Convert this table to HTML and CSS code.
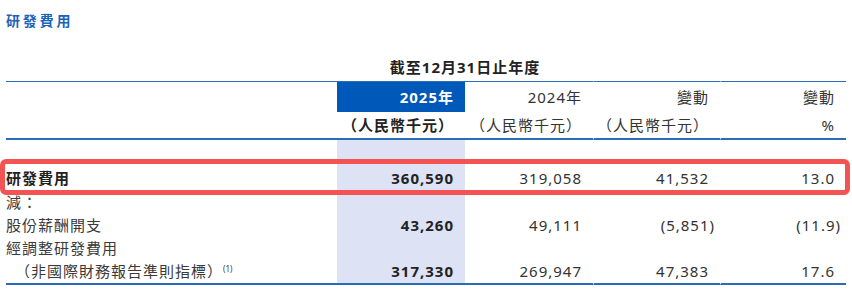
FILE: index.html
```html
<!DOCTYPE html>
<html lang="zh-Hant">
<head>
<meta charset="utf-8">
<title>研發費用</title>
<link rel="stylesheet" href="styles.css">
</head>
<body>
<div class="page">
  <div class="title">研發費用</div>
  <table class="fin">
    <colgroup>
      <col class="c-label">
      <col class="c-num">
      <col class="c-num">
      <col class="c-num4">
      <col class="c-num5">
    </colgroup>
    <tr class="period">
      <td></td>
      <td colspan="2" class="period-text">截至12月31日止年度</td>
      <td class="gap"></td>
      <td class="gap"></td>
    </tr>
    <tr class="years">
      <td></td>
      <td class="num cur">2025年</td>
      <td class="num">2024年</td>
      <td class="num gap">變動</td>
      <td class="num gap">變動</td>
    </tr>
    <tr class="units">
      <td></td>
      <td class="num curb">（人民幣千元）</td>
      <td class="num">（人民幣千元）</td>
      <td class="num gap">（人民幣千元）</td>
      <td class="num gap">%</td>
    </tr>
    <tr class="spacer">
      <td></td><td class="hl"></td><td></td><td></td><td></td>
    </tr>
    <tr class="first">
      <td class="label bold">研發費用</td>
      <td class="num hl bold">360,590</td>
      <td class="num">319,058</td>
      <td class="num">41,532</td>
      <td class="num">13.0</td>
    </tr>
    <tr class="row">
      <td class="label">減：</td>
      <td class="num hl"></td>
      <td></td><td></td><td></td>
    </tr>
    <tr class="row">
      <td class="label">股份薪酬開支</td>
      <td class="num hl bold">43,260</td>
      <td class="num">49,111</td>
      <td class="num neg">(5,851)</td>
      <td class="num neg">(11.9)</td>
    </tr>
    <tr class="row">
      <td class="label">經調整研發費用</td>
      <td class="num hl"></td>
      <td></td><td></td><td></td>
    </tr>
    <tr class="row last">
      <td class="label indent">（非國際財務報告準則指標）<sup class="note">(1)</sup></td>
      <td class="num hl bold">317,330</td>
      <td class="num">269,947</td>
      <td class="num gap">47,383</td>
      <td class="num gap">17.6</td>
    </tr>
  </table>
  <div class="highlight"></div>
</div>
</body>
</html>
```

FILE: styles.css
```css
html, body {
  margin: 0;
  padding: 0;
  background: #ffffff;
}

body {
  font-family: "Noto Sans", "Noto Sans CJK TC", sans-serif;
  color: #333333;
}

.page {
  position: relative;
  width: 852px;
  height: 291px;
  padding: 0 6px;
  box-sizing: border-box;
}

.title {
  padding-top: 11px;
  line-height: 20px;
  margin-bottom: 23px;
  font-size: 14px;
  font-weight: 700;
  letter-spacing: 2.8px;
  color: #1a64b8;
}

.fin {
  width: 840px;
  table-layout: fixed;
  border-collapse: separate;
  border-spacing: 0;
  font-size: 15px;
  letter-spacing: 1px;
}

.c-label { width: 331px; }
.c-num { width: 128px; }
.c-num4 { width: 127px; }
.c-num5 { width: 126px; }

.fin td {
  padding: 0;
  white-space: nowrap;
  vertical-align: middle;
}

.period td {
  line-height: 27px;
  border-bottom: 1px solid #2b6cb8;
}

.period-text {
  text-align: center;
  font-weight: 700;
  color: #222222;
}

.years td {
  line-height: 30px;
}

.units td {
  line-height: 26px;
  border-bottom: 2px solid #2b6cb8;
}

.fin td.gap {
  border-left: 1px solid #ffffff;
}

.spacer td {
  height: 26px;
}

.first td {
  line-height: 25px;
}

.row td {
  line-height: 23px;
}

.last td {
  border-bottom: 2px solid #2b6cb8;
}

.num {
  text-align: right;
  padding-right: 11px !important;
}

.num.neg {
  padding-right: 5px !important;
}

.cur {
  background: #0058b8;
  color: #ffffff;
  font-weight: 700;
}

.curb {
  font-weight: 700;
  color: #222222;
}

.hl {
  background: #dde3f4;
}

.bold {
  font-weight: 700;
  color: #222222;
}

.label {
  color: #3a3a3a;
}

.label.bold {
  color: #222222;
}

.indent {
  padding-left: 9px !important;
}

.note {
  font-size: 8px;
  letter-spacing: 0;
  vertical-align: 5px;
  line-height: 0;
  margin-left: 0;
}

.highlight {
  position: absolute;
  left: 0;
  top: 159px;
  width: 850px;
  height: 36px;
  box-sizing: border-box;
  border: 5px solid #f45353;
  border-radius: 6px;
  pointer-events: none;
}
```
